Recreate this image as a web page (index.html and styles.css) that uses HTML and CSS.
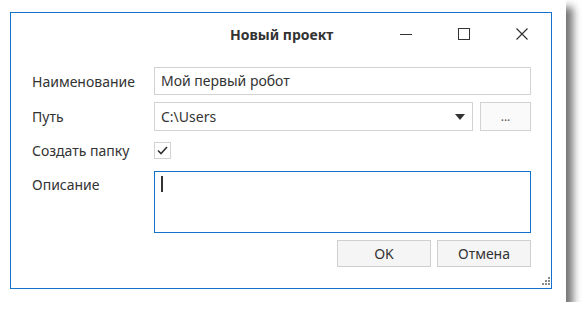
FILE: index.html
```html
<!DOCTYPE html>
<html lang="ru">

<head>
  <meta charset="UTF-8">
  <meta name="viewport" content="width=device-width, initial-scale=1.0">
  <title>Новый проект</title>
  <link rel="stylesheet" href="styles.css">
</head>

<body>
  <div class="frame">
    <div class="window">
      <div class="titlebar">
        <div class="title">Новый проект</div>
        <div class="caption">
          <a href="javascript:;" class="cap-btn">
            <svg width="14" height="14" viewBox="0 0 14 14"><path d="M1 7.5h12" stroke="#333" stroke-width="1"/></svg>
          </a>
          <a href="javascript:;" class="cap-btn">
            <svg width="14" height="14" viewBox="0 0 14 14"><rect x="1.5" y="1.5" width="11" height="11" fill="none" stroke="#333" stroke-width="1"/></svg>
          </a>
          <a href="javascript:;" class="cap-btn">
            <svg width="14" height="14" viewBox="0 0 14 14"><path d="M1.5 1.5l11 11M12.5 1.5l-11 11" stroke="#333" stroke-width="1.2"/></svg>
          </a>
        </div>
      </div>

      <div class="form">
        <div class="row row-name">
          <label class="label">Наименование</label>
          <div class="field input">Мой первый робот</div>
        </div>
        <div class="row row-path">
          <label class="label">Путь</label>
          <div class="field combo">
            <span>C:\Users</span>
            <svg class="arrow" width="10" height="6" viewBox="0 0 10 6"><path d="M0 0h10L5 6z" fill="#333"/></svg>
          </div>
          <a href="javascript:;" class="browse">...</a>
        </div>
        <div class="row row-check">
          <label class="label">Создать папку</label>
          <div class="check">
            <svg width="13" height="13" viewBox="0 0 13 13"><path d="M2 6.5l3 3 6-6.5" fill="none" stroke="#333" stroke-width="1.6"/></svg>
          </div>
        </div>
        <div class="row row-desc">
          <label class="label">Описание</label>
          <div class="field memo"><span class="caret"></span></div>
        </div>
        <div class="buttons">
          <a href="javascript:;" class="btn">OK</a>
          <a href="javascript:;" class="btn">Отмена</a>
        </div>
      </div>

      <svg class="grip" width="10" height="10" viewBox="0 0 10 10">
        <g fill="#8a8a8a">
          <rect x="8" y="0" width="2" height="2"/>
          <rect x="5" y="3" width="2" height="2"/>
          <rect x="8" y="3" width="2" height="2"/>
          <rect x="2" y="6" width="2" height="2"/>
          <rect x="5" y="6" width="2" height="2"/>
          <rect x="8" y="6" width="2" height="2"/>
        </g>
      </svg>
    </div>
  </div>
</body>

</html>
```

FILE: styles.css
```css
* {
  padding: 0;
  margin: 0;
  box-sizing: border-box;
}

body {
  background-color: #fff;
  font-family: "Noto Sans", "Open Sans", sans-serif;
  font-size: 14px;
  color: #333;
}

a {
  color: #333;
  text-decoration: none;
}

.frame {
  width: 566px;
  height: 302px;
  padding: 12px 0 0 10px;
  background-color: #fff;
  box-shadow: 7px 7px 8px rgba(0, 0, 0, 0.55);
}

.window {
  position: relative;
  width: 542px;
  height: 277px;
  border: 1px solid #1672c9;
  background-color: #fff;
}

.titlebar {
  height: 42px;
  display: flex;
  align-items: center;
}

.title {
  flex: 1;
  padding-left: 219px;
  font-weight: bold;
  font-size: 14px;
  color: #333;
}

.caption {
  display: flex;
}

.cap-btn {
  width: 58px;
  height: 28px;
  display: flex;
  align-items: center;
  justify-content: center;
}

.form {
  padding: 12px 20px 0 21px;
}

.row {
  display: flex;
  align-items: center;
}

.label {
  width: 122px;
  flex-shrink: 0;
  font-size: 14px;
}

.field {
  border: 1px solid #d2d2d2;
  background-color: #fff;
  padding: 0 6px;
}

.input {
  flex: 1;
  height: 28px;
  line-height: 26px;
}

.row-path {
  margin-top: 7px;
}

.combo {
  flex: 1;
  height: 29px;
  display: flex;
  align-items: center;
  justify-content: space-between;
  padding-right: 7px;
}

.browse {
  width: 51px;
  height: 29px;
  margin-left: 7px;
  border: 1px solid #d2d2d2;
  background-color: #fafafa;
  text-align: center;
  line-height: 27px;
  font-size: 12px;
  color: #555;
}

.row-check {
  margin-top: 11px;
  height: 17px;
}

.check {
  width: 17px;
  height: 17px;
  border: 1px solid #d2d2d2;
  display: flex;
  align-items: center;
  justify-content: center;
}

.row-desc {
  margin-top: 12px;
  align-items: flex-start;
}

.row-desc .label {
  padding-top: 4px;
}

.memo {
  flex: 1;
  height: 62px;
  border-color: #1672c9;
  padding-top: 4px;
}

.caret {
  display: block;
  width: 2px;
  height: 16px;
  background-color: #333;
}

.buttons {
  display: flex;
  justify-content: flex-end;
  gap: 6px;
  margin-top: 7px;
}

.btn {
  width: 94px;
  height: 27px;
  border: 1px solid #cfcfcf;
  background-color: #f5f5f5;
  text-align: center;
  line-height: 25px;
  font-size: 14px;
}

.grip {
  position: absolute;
  right: 1px;
  bottom: 1px;
}
```
